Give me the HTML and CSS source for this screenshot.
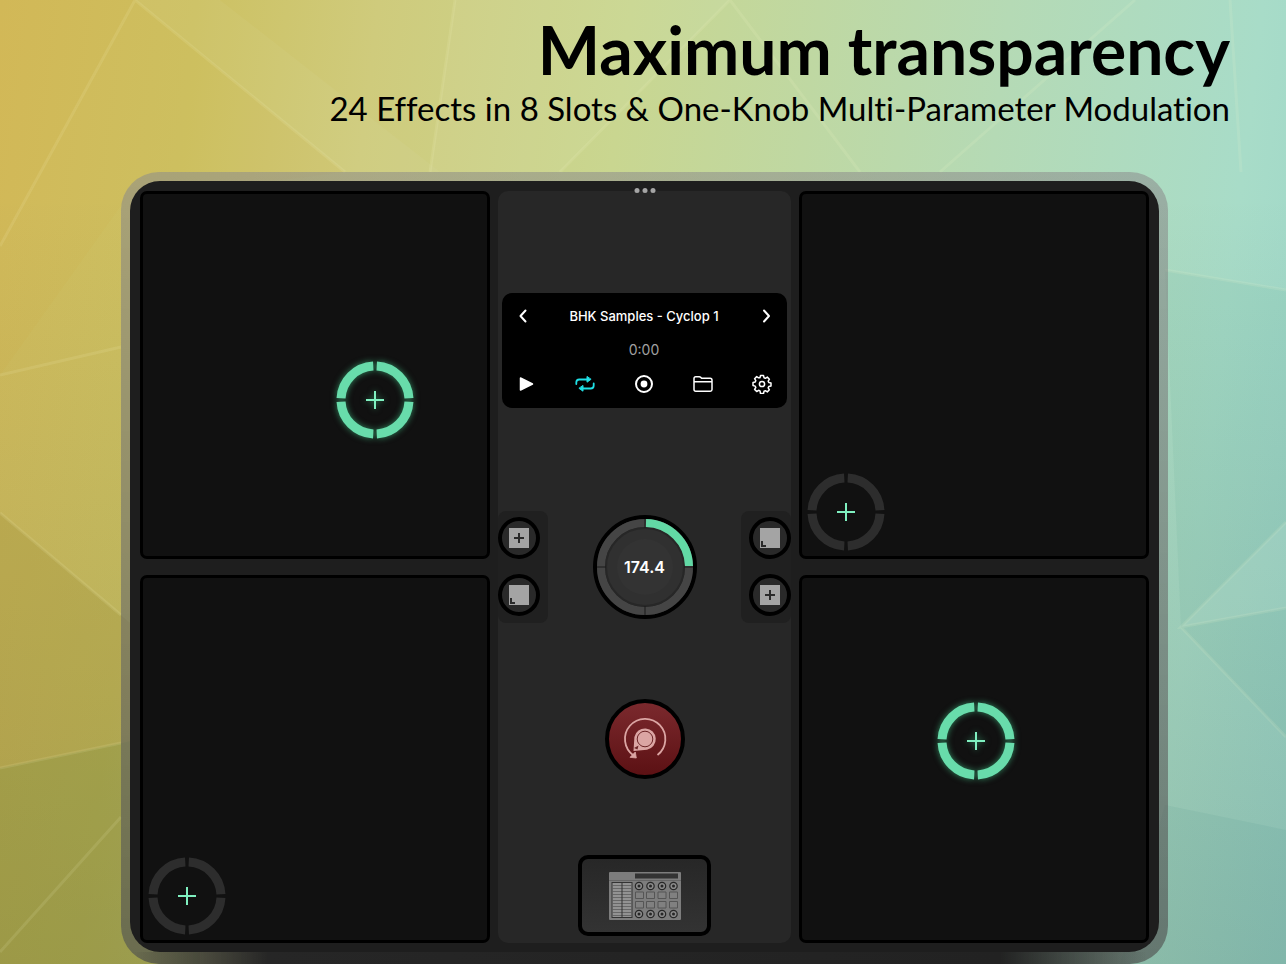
FILE: index.html
```html
<!DOCTYPE html>
<html lang="en">
<head>
  <meta charset="UTF-8" />
  <meta name="viewport" content="width=device-width, initial-scale=1.0"/>
  <title>Maximum transparency</title>
  <link rel="stylesheet" href="styles.css">
</head>
<body>
  <!-- low-poly backdrop -->
  <svg class="backdrop" viewBox="0 0 1286 964" preserveAspectRatio="none" aria-hidden="true">
    <defs>
      <linearGradient id="shade" x1="0" y1="0" x2="0" y2="1">
        <stop offset="0.2" stop-color="#203020" stop-opacity="0"/>
        <stop offset="1" stop-color="#203020" stop-opacity="0.16"/>
      </linearGradient>
    </defs>
    <rect width="1286" height="964" fill="url(#shade)"/>
    <g fill="#d89a2c">
      <path d="M0 0H135L0 246z" opacity=".08"/>
      <path d="M135 0L345 172L125 200L0 375V246z" opacity=".05"/>
      <path d="M0 513L200 682V727L0 768z" fill="#8a7a20" opacity=".18"/>
      <path d="M0 768L200 727V964H0z" fill="#5d7020" opacity=".26"/>
    </g>
    <g fill="#fff">
      <path d="M135 0H220L440 172H345z" opacity=".04"/>
      <path d="M455 0H730L560 172H430z" opacity=".05"/>
      <path d="M1181 627L1286 522V608z" opacity=".04"/>
    </g>
    <g fill="#146d68">
      <path d="M1165 270L1286 290V522L1181 627z" opacity=".05"/>
      <path d="M1181 627L1286 737V608z" opacity=".05"/>
      <path d="M1165 805L1286 830V964H1120z" opacity=".06"/>
    </g>
    <g stroke="#fffbd0" stroke-opacity=".11" stroke-width="3" fill="none">
      <path d="M135 0L0 246M135 0L345 172M0 375L121 347M0 513L121 615M0 768L121 743M0 952L121 817"/>
      <path d="M455 0L430 172M730 0L560 172M730 0L860 172M1135 0L940 172M1230 0L1241 172M1286 290L1165 270"/>
      <path d="M1286 522L1181 627L1286 608M1181 627L1286 737"/>
    </g>
  </svg>

  <header class="headline">
    <h1>Maximum transparency</h1>
    <p>24 Effects in 8 Slots &amp; One-Knob Multi-Parameter Modulation</p>
  </header>

  <!-- shared drawings -->
  <svg class="symbols" aria-hidden="true">
    <symbol id="ring" viewBox="0 0 78 78">
      <circle class="ring-arc" cx="39" cy="39" r="34" pathLength="360" stroke-dasharray="84 6" stroke-dashoffset="-3"/>
      <path class="ring-plus" d="M30 39h18M39 30v18"/>
    </symbol>
    <symbol id="plus-pad" viewBox="0 0 20 20">
      <path d="M0 0h20v20H0z" fill="#a4a4a4"/>
      <path d="M5 10h10M10 5v10" stroke="#2a2a2a" stroke-width="2"/>
    </symbol>
    <symbol id="corner-pad" viewBox="0 0 20 20">
      <path d="M0 0h20v20H0z" fill="#a4a4a4"/>
      <path d="M2 13v5h4" stroke="#2a2a2a" stroke-width="2" fill="none"/>
    </symbol>
  </svg>

  <div class="tablet">
    <main class="screen">
      <div class="dots"><i></i><i></i><i></i></div>

      <div class="pads">
        <div class="pad">
          <button class="handle active" aria-label="Move effect 1" style="left: 67.4%; top: 56.8%;"><svg><use href="#ring"/></svg></button>
        </div>
        <div class="pad">
          <button class="handle" aria-label="Move effect 2" style="left: 12.8%; top: 87.9%;"><svg><use href="#ring"/></svg></button>
        </div>
      </div>

      <section class="center">
        <div class="player">
          <div class="player-row">
            <button aria-label="Previous sample"><svg viewBox="0 0 20 20"><path d="M9.500 4.500L4.500 10l5 5.500"/></svg></button>
            <span class="track">BHK Samples - Cyclop 1</span>
            <button aria-label="Next sample"><svg viewBox="0 0 20 20"><path d="M12 4.500L17 10l-5 5.500"/></svg></button>
          </div>
          <div class="time">0:00</div>
          <div class="player-row">
            <button aria-label="Play"><svg viewBox="0 0 20 20"><path d="M4.500 4v12L16.500 10z" fill="#fff" stroke-width="1.500"/></svg></button>
            <button class="loop" aria-label="Loop"><svg viewBox="0 0 20 20"><path d="M1.300 10V8.500a3 3 0 0 1 3-3H13M18.700 9.500V11.500a3 3 0 0 1-3 3H7" stroke-width="1.800"/><path d="M12 2.800v5.400l3.800-2.700zM8 11.800v5.400l-3.800-2.700z" fill="currentColor" stroke-width="1"/></svg></button>
            <button aria-label="Record"><svg viewBox="0 0 20 20"><circle cx="10" cy="10" r="8"/><circle cx="10" cy="10" r="3.400" fill="#fff" stroke="none"/></svg></button>
            <button aria-label="Open folder"><svg viewBox="0 0 20 20"><path d="M1 15.500v-11q0-1.700 1.700-1.700h3.600q.8 0 1.400.6l.9.900h8.500q1.900 0 1.900 1.900v9.300q0 1.700-1.700 1.700H2.700Q1 17.200 1 15.500zM1 7.700h18" stroke-width="1.500"/></svg></button>
            <button aria-label="Settings"><svg viewBox="0 0 20 20"><path d="M8.500 1.500h3l.5 2.200 1.400.6 1.900-1.200 2.100 2.100-1.200 1.900.6 1.400 2.200.5v3l-2.200.5-.6 1.400 1.200 1.900-2.100 2.100-1.900-1.200-1.400.6-.5 2.200h-3L8 16.900l-1.400-.6-1.900 1.200-2.100-2.100 1.200-1.900-.6-1.400L1 11.500v-3L3.200 8l.6-1.400-1.200-1.900 2.100-2.100 1.900 1.200L8 3.700z" stroke-width="1.500"/><circle cx="10" cy="10" r="2.600" stroke-width="1.500"/></svg></button>
          </div>
        </div>

        <div class="tempo-row">
          <div class="side left">
            <button class="round" aria-label="Center pad 1"><svg><use href="#plus-pad"/></svg></button>
            <button class="round" aria-label="Corner pad 2"><svg><use href="#corner-pad"/></svg></button>
          </div>
          <div class="tempo">
            <svg viewBox="0 0 104 104" aria-hidden="true">
              <circle cx="52" cy="52" r="50" fill="#292929" stroke="#000" stroke-width="4"/>
              <circle cx="52" cy="52" r="44" fill="none" stroke="#454545" stroke-width="8"/>
              <circle cx="52" cy="52" r="39" fill="#303030" stroke="#272727" stroke-width="2"/>
              <circle cx="52" cy="52" r="28" fill="#333"/>
              <path d="M52 4v9M52 91v9M4 52h9M91 52h9" stroke="#1a1a1a" stroke-width="1"/>
              <path d="M53 8a44 44 0 0 1 43 43" fill="none" stroke="#62d9a5" stroke-width="8"/>
            </svg>
            <span>174.4</span>
          </div>
          <div class="side right">
            <button class="round" aria-label="Corner pad 3"><svg><use href="#corner-pad"/></svg></button>
            <button class="round" aria-label="Center pad 4"><svg><use href="#plus-pad"/></svg></button>
          </div>
        </div>

        <button class="modulate" aria-label="Modulate">
          <svg viewBox="0 0 44 44">
            <path d="M10.500 38.500A20.200 20.200 0 1 1 34.500 38" fill="none" stroke="#dba5a3" stroke-width="1.800"/>
            <path d="M7 40.300l6.300.7-1-6z" fill="#dba5a3" stroke="#dba5a3" stroke-width=".8"/>
            <path d="M10.500 34L11.400 20A10.800 10.800 0 1 1 24 32.800z" fill="#dba5a3"/>
            <circle cx="22" cy="22" r="7.800" fill="#dba5a3" stroke="#6b2426" stroke-width="1"/>
            <path d="M11 31l4.500-2.500-1 4z" fill="#6b2426"/>
          </svg>
        </button>

        <button class="rack" aria-label="Effect rack">
          <svg viewBox="0 0 72 48">
            <defs>
              <g id="dial"><circle r="3.700" fill="#8a8a8a" stroke="#272727" stroke-width="1.200"/><circle r="1.500" fill="#272727"/></g>
              <g id="dials"><use href="#dial" x="30"/><use href="#dial" x="41.500"/><use href="#dial" x="53"/><use href="#dial" x="64.500"/></g>
              <path id="slots" d="M26.500 0h8v6.500h-8zM37.500 0h8v6.500h-8zM49 0h8v6.500h-8zM60.500 0h8v6.500h-8z" fill="#808080" stroke="#555"/>
            </defs>
            <rect width="72" height="48" rx="1" fill="#7d7d7d"/>
            <rect x="26" y="1.500" width="43" height="5" fill="#333"/>
            <path d="M0 8.500h72" stroke="#666"/>
            <rect x="3" y="10.500" width="20" height="35" fill="#929292" stroke="#333"/>
            <path d="M3 13.500h20M3 16.500h20M3 19.500h20M3 22.500h20M3 25.500h20M3 28.500h20M3 31.500h20M3 34.500h20M3 37.500h20M3 40.500h20M3 43.500h20" stroke="#5c5c5c" stroke-width=".8"/>
            <path d="M13 10.500v35" stroke="#333"/>
            <use href="#dials" y="14"/>
            <use href="#slots" y="20"/>
            <use href="#slots" y="29.500"/>
            <use href="#dials" y="42"/>
          </svg>
        </button>
      </section>

      <div class="pads">
        <div class="pad">
          <button class="handle" aria-label="Move effect 3" style="left: 12.8%; top: 87.9%;"><svg><use href="#ring"/></svg></button>
        </div>
        <div class="pad">
          <button class="handle active" aria-label="Move effect 4" style="left: 50.6%; top: 45%;"><svg><use href="#ring"/></svg></button>
        </div>
      </div>
    </main>
  </div>
</body>
</html>
```

FILE: styles.css
```css
* {
  box-sizing: border-box;
}

body {
  margin: 0;
  position: relative;
  overflow-x: hidden;
  min-height: 100vh;
  font-family: Inter, "Liberation Sans", sans-serif;
  background: linear-gradient(97deg, #d2bb5c 0%, #cdc162 14%, #cfcb7c 27%, #c9d690 45%, #b5dab5 72%, #a8dcc8 90%, #9cd6ca 100%);
}

button {
  padding: 0;
  border: 0;
  background: none;
  color: inherit;
  font: inherit;
  cursor: pointer;
}

.backdrop {
  position: absolute;
  inset: 0;
  width: 100%;
  height: 100%;
}

.symbols {
  position: absolute;
  width: 0;
  height: 0;
}

.headline {
  position: relative;
  padding: 12px 56px 44px;
  text-align: right;
  color: #000;
  font-family: Lato, "Noto Sans", sans-serif;
  font-variant-ligatures: none;
}

.headline h1 {
  margin: 0;
  font-size: 66px;
  line-height: 76px;
  font-weight: 700;
}

.headline p {
  margin: 0;
  font-size: 33px;
  line-height: 40px;
}

.tablet {
  position: relative;
  margin: 0 118px 0 121px;
  padding: 9px 9px 12px;
  border-radius: 38px;
  background:
    linear-gradient(90deg, transparent 1%, #262626 14%, #222 84%, transparent 98%) bottom / 100% 12px no-repeat,
    linear-gradient(180deg, rgba(140, 140, 140, 0.55), rgba(80, 82, 80, 0.65));
}

.screen {
  position: relative;
  display: grid;
  grid-template-columns: 1fr 293px 1fr;
  gap: 8px;
  padding: 10px 10px 9px;
  border-radius: 30px;
  background: #1e1e1e;
}

.dots {
  position: absolute;
  top: 7px;
  left: 50%;
  display: flex;
  gap: 3px;
  transform: translateX(-50%);
}

.dots i {
  width: 5px;
  height: 5px;
  border-radius: 50%;
  background: #a5a5a5;
}

.pads {
  display: grid;
  gap: 16px;
}

.pad {
  position: relative;
  min-height: 368px;
  border: 3px solid #000;
  border-radius: 7px;
  background: #111;
}

.handle {
  position: absolute;
  width: 78px;
  height: 78px;
  transform: translate(-50%, -50%);
  color: #2d2d2d;
}

.handle svg {
  display: block;
  width: 78px;
  height: 78px;
  overflow: visible;
}

.handle.active {
  color: #68dcab;
}

.handle.active svg {
  filter: drop-shadow(0 0 3px rgba(70, 210, 145, 0.6));
}

.ring-arc {
  fill: none;
  stroke: currentColor;
  stroke-width: 9;
}

.ring-plus {
  stroke: #7ff0c0;
  stroke-width: 2;
}

.center {
  display: flex;
  flex-direction: column;
  align-items: center;
  padding: 102px 0 7px;
  border-radius: 10px;
  background: #272727;
}

.player {
  align-self: stretch;
  margin: 0 4px;
  padding: 13px 15px 14px 14px;
  border-radius: 10px;
  background: #000;
  color: #fff;
}

.player-row {
  display: flex;
  justify-content: space-between;
  align-items: center;
}

.player button,
.player svg {
  display: block;
  width: 20px;
  height: 20px;
}

.player svg {
  fill: none;
  stroke: currentColor;
  stroke-width: 2;
  stroke-linecap: round;
  stroke-linejoin: round;
}

.player .loop {
  color: #1fe0e6;
}

.track {
  font-size: 13px;
  line-height: 20px;
  font-weight: 500;
}

.time {
  margin: 14px 0;
  font-size: 14px;
  line-height: 20px;
  text-align: center;
  color: #a0a0a0;
}

.tempo-row {
  align-self: stretch;
  display: flex;
  justify-content: space-between;
  align-items: center;
  margin: 103px 0 76px;
}

.side {
  display: flex;
  flex-direction: column;
  gap: 15px;
  width: 50px;
  padding: 6px 0 7px;
  border-radius: 8px;
  background: #202020;
}

.side.right {
  align-items: flex-end;
}

.round {
  display: grid;
  place-items: center;
  width: 42px;
  height: 42px;
  border: 4px solid #000;
  border-radius: 50%;
  background: #292929;
}

.round svg {
  width: 20px;
  height: 20px;
}

.tempo {
  display: grid;
  place-items: center;
}

.tempo svg,
.tempo span {
  grid-area: 1 / 1;
}

.tempo svg {
  width: 104px;
  height: 104px;
}

.tempo span {
  position: relative;
  font-size: 16px;
  font-weight: 600;
  color: #fff;
}

.modulate {
  display: grid;
  place-items: center;
  width: 80px;
  height: 80px;
  border: 4px solid #000;
  border-radius: 50%;
  background: linear-gradient(#7b292d, #5c1114);
}

.modulate svg {
  width: 44px;
  height: 44px;
}

.rack {
  display: grid;
  place-items: center;
  width: 133px;
  height: 81px;
  margin-top: 76px;
  border: 4px solid #000;
  border-radius: 10px;
  background: linear-gradient(#272727, #333);
}

.rack svg {
  width: 72px;
  height: 48px;
}
```
